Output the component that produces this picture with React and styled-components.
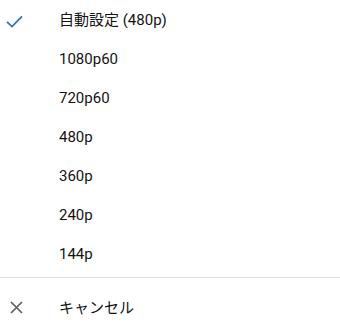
import React from 'react'
import styled, { createGlobalStyle } from 'styled-components'

const GlobalStyle = createGlobalStyle`
  html, body {
    margin: 0;
    padding: 0;
    background: #ffffff;
  }
  body {
    font-family: Roboto, "Noto Sans CJK JP", sans-serif;
  }
`

const Sheet = styled.div`
  width: 340px;
  height: 330px;
  background: #ffffff;
  display: flex;
  flex-direction: column;
`

const List = styled.ul`
  list-style: none;
  margin: 0;
  padding: 0 0 4px;
`

const Row = styled.li`
  height: 39px;
  display: flex;
  align-items: center;
  margin-top: ${p => p.$offset || 0}px;
`

const IconSlot = styled.span`
  width: 59px;
  flex: none;
  display: flex;
  align-items: center;
  padding-left: ${p => p.$pad}px;
  padding-top: ${p => p.$drop || 0}px;
  box-sizing: border-box;
`

const Label = styled.span`
  font-size: 15px;
  color: #131313;
  line-height: 20px;
`

const Divider = styled.div`
  height: 1px;
  background: #e0e0e0;
`

const Check = () => (
  <svg width="17" height="13" viewBox="0 0 17 13">
    <path d="M1 6.8 L6 11.6 L16 1.4" fill="none" stroke="#3a6fc4" strokeWidth="1.8" />
  </svg>
)

const Close = () => (
  <svg width="13" height="13" viewBox="0 0 13 13">
    <path d="M1 1 L12 12 M12 1 L1 12" fill="none" stroke="#606060" strokeWidth="1.7" />
  </svg>
)

const options = ['自動設定 (480p)', '1080p60', '720p60', '480p', '360p', '240p', '144p']

export default function App() {
  return (
    <>
      <GlobalStyle />
      <Sheet>
        <List>
          {options.map((o, i) => (
            <Row key={o}>
              <IconSlot $pad={6} $drop={4}>{i === 0 && <Check />}</IconSlot>
              <Label>{o}</Label>
            </Row>
          ))}
        </List>
        <Divider />
        <Row as="div" $offset={10}>
          <IconSlot $pad={10}><Close /></IconSlot>
          <Label>キャンセル</Label>
        </Row>
      </Sheet>
    </>
  )
}
